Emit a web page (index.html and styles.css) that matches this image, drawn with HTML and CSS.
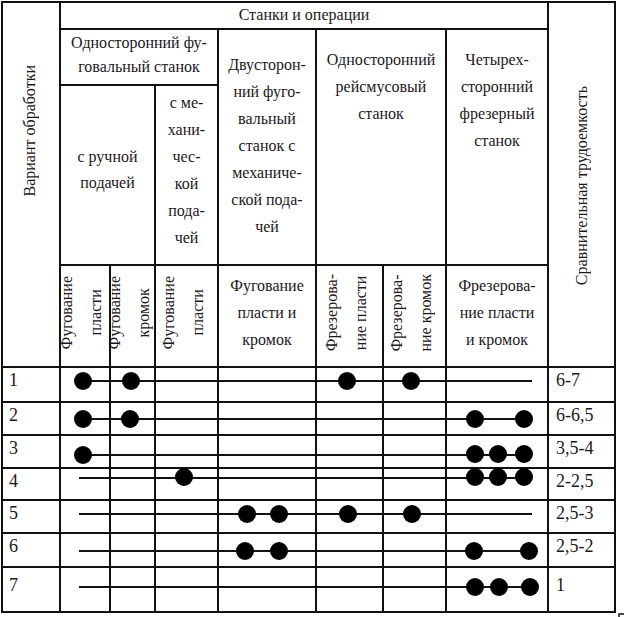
FILE: index.html
```html
<!DOCTYPE html>
<html lang="ru">
<head>
<meta charset="utf-8">
<title>Станки и операции</title>
<link rel="stylesheet" href="styles.css">
</head>
<body>
<div class="page">
  <div class="grid">
    <div class="cell c-variant"><div class="rot">Вариант обработки</div></div>
    <div class="cell c-machines">Станки и операции</div>
    <div class="cell c-labor"><div class="rot">Сравнительная трудоемкость</div></div>
    <div class="cell c-jointer">Односторонний фу-<br>говальный станок</div>
    <div class="cell c-double">Двусторон-<br>ний фуго-<br>вальный<br>станок с<br>механиче-<br>ской пода-<br>чей</div>
    <div class="cell c-planer top">Односторонний<br>рейсмусовый<br>станок</div>
    <div class="cell c-four top">Четырех-<br>сторонний<br>фрезерный<br>станок</div>
    <div class="cell c-manual">с ручной<br>подачей</div>
    <div class="cell c-mech">с ме-<br>хани-<br>чес-<br>кой<br>пода-<br>чей</div>

    <div class="cell op"><div class="rot">Фугование<br>пласти</div></div>
    <div class="cell op"><div class="rot">Фугование<br>кромок</div></div>
    <div class="cell op"><div class="rot">Фугование<br>пласти</div></div>
    <div class="cell op-h">Фугование<br>пласти и<br>кромок</div>
    <div class="cell op"><div class="rot">Фрезерова-<br>ние пласти</div></div>
    <div class="cell op"><div class="rot">Фрезерова-<br>ние кромок</div></div>
    <div class="cell op-h">Фрезерова-<br>ние пласти<br>и кромок</div>

    <div class="cell num">1</div><div class="cell"></div><div class="cell"></div><div class="cell"></div><div class="cell"></div><div class="cell"></div><div class="cell"></div><div class="cell"></div><div class="cell num val">6-7</div>
    <div class="cell num">2</div><div class="cell"></div><div class="cell"></div><div class="cell"></div><div class="cell"></div><div class="cell"></div><div class="cell"></div><div class="cell"></div><div class="cell num val">6-6,5</div>
    <div class="cell num">3</div><div class="cell"></div><div class="cell"></div><div class="cell"></div><div class="cell"></div><div class="cell"></div><div class="cell"></div><div class="cell"></div><div class="cell num val">3,5-4</div>
    <div class="cell num">4</div><div class="cell"></div><div class="cell"></div><div class="cell"></div><div class="cell"></div><div class="cell"></div><div class="cell"></div><div class="cell"></div><div class="cell num val">2-2,5</div>
    <div class="cell num">5</div><div class="cell"></div><div class="cell"></div><div class="cell"></div><div class="cell"></div><div class="cell"></div><div class="cell"></div><div class="cell"></div><div class="cell num val">2,5-3</div>
    <div class="cell num">6</div><div class="cell"></div><div class="cell"></div><div class="cell"></div><div class="cell"></div><div class="cell"></div><div class="cell"></div><div class="cell"></div><div class="cell num val">2,5-2</div>
    <div class="cell num last">7</div><div class="cell"></div><div class="cell"></div><div class="cell"></div><div class="cell"></div><div class="cell"></div><div class="cell"></div><div class="cell"></div><div class="cell num val last">1</div>
  </div>

  <svg class="marks" width="624" height="617" viewBox="0 0 624 617" xmlns="http://www.w3.org/2000/svg">
    <g stroke="#111" stroke-width="2" fill="none">
      <line x1="83" y1="381" x2="532" y2="381"/>
      <line x1="83" y1="419" x2="524" y2="419"/>
      <line x1="83" y1="455" x2="524" y2="455"/>
      <line x1="79" y1="478" x2="524" y2="478"/>
      <line x1="79" y1="514" x2="532" y2="514"/>
      <line x1="79" y1="551" x2="529" y2="551"/>
      <line x1="79" y1="587" x2="530" y2="587"/>
      <path d="M619 617 V614 H624" stroke-width="1.5"/>
    </g>
    <g fill="#000">
      <circle cx="83" cy="381" r="9"/><circle cx="131" cy="381" r="9"/><circle cx="347" cy="381" r="9"/><circle cx="411" cy="381" r="9"/>
      <circle cx="83" cy="419" r="9"/><circle cx="130" cy="419" r="9"/><circle cx="475" cy="419" r="9"/><circle cx="524" cy="419" r="9"/>
      <circle cx="83" cy="455" r="9"/><circle cx="475" cy="454" r="9"/><circle cx="498" cy="454" r="9"/><circle cx="524" cy="454" r="9"/>
      <circle cx="184" cy="477" r="9"/><circle cx="475" cy="477" r="9"/><circle cx="498" cy="477" r="9"/><circle cx="524" cy="477" r="9"/>
      <circle cx="247" cy="514" r="9"/><circle cx="279" cy="514" r="9"/><circle cx="348" cy="514" r="9"/><circle cx="412" cy="514" r="9"/>
      <circle cx="245" cy="551" r="9"/><circle cx="279" cy="551" r="9"/><circle cx="474" cy="551" r="9"/><circle cx="529" cy="551" r="9"/>
      <circle cx="475" cy="587" r="9"/><circle cx="499" cy="587" r="9"/><circle cx="530" cy="587" r="9"/>
    </g>
  </svg>
</div>
</body>
</html>
```

FILE: styles.css
```css
* { box-sizing: border-box; }

body {
  margin: 0;
  background: #fff;
  font-family: "Liberation Serif", "DejaVu Serif", serif;
  color: #1d1722;
}

.page {
  position: relative;
  width: 624px;
  height: 617px;
  padding: 1px 0 0 1px;
  font-family: "Liberation Serif", "DejaVu Serif", serif;
}

.grid {
  display: grid;
  grid-template-columns: 56px 48px 43px 61px 96px 65px 61px 100px 65px;
  grid-template-rows: 25px 54px 178px 100px 33px 31px 31px 30px 31px 32px 43px;
  gap: 2px;
  padding: 2px;
  width: max-content;
  background: #111;
}

.cell {
  background: #fff;
  font-family: "Liberation Serif", "DejaVu Serif", serif;
  font-size: 16px;
  line-height: 27px;
  display: flex;
  flex-direction: column;
  align-items: center;
  justify-content: center;
  text-align: center;
  white-space: nowrap;
}

.rot {
  writing-mode: vertical-rl;
  transform: rotate(180deg);
  line-height: 29px;
  text-align: center;
}

.c-variant { grid-column: 1; grid-row: 1 / 5; justify-content: flex-start; padding: 62px 4px 0 0; }
.c-machines { grid-column: 2 / 9; grid-row: 1; padding-bottom: 3px; }
.c-labor { grid-column: 9; grid-row: 1 / 5; padding-top: 2px; }
.c-jointer { grid-column: 2 / 5; grid-row: 2; line-height: 24px; padding-bottom: 4px; }
.c-double { grid-column: 5; grid-row: 2 / 4; padding-bottom: 4px; }
.c-planer { grid-column: 6 / 8; grid-row: 2 / 4; }
.c-four { grid-column: 8; grid-row: 2 / 4; }
.c-manual { grid-column: 2 / 4; grid-row: 3; line-height: 26px; padding-bottom: 10px; }
.c-mech { grid-column: 4; grid-row: 3; padding-bottom: 10px; }

.top { justify-content: flex-start; padding-top: 16px; }

.op { padding: 0 8px 6px 0; }
.op-h { padding-bottom: 8px; }

.num {
  font-size: 18px;
  line-height: 20px;
  align-items: flex-start;
  justify-content: flex-start;
  padding: 2px 0 0 6px;
}
.val { padding-left: 7px; }
.num.last { padding-top: 7px; }

.marks {
  position: absolute;
  left: 0;
  top: 0;
  pointer-events: none;
}
```
